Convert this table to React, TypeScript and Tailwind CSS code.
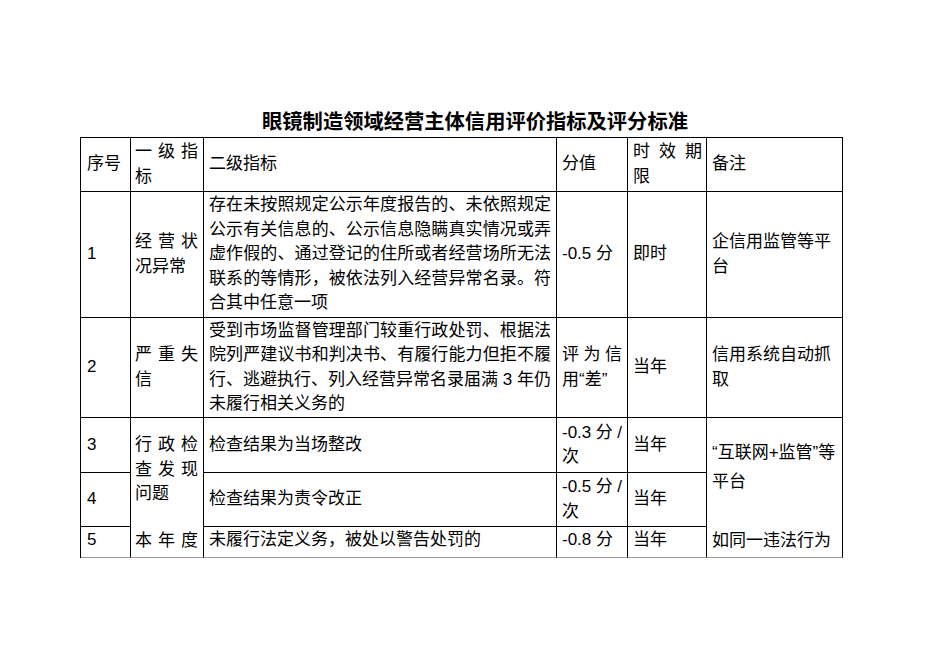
import React from "react";

const FONT = "font-['Liberation_Sans','Noto_Sans_CJK_SC',sans-serif]";

function J({ items }: { items: string[] }) {
  return (
    <div className="flex justify-between whitespace-nowrap">
      {items.map((s, i) => (
        <span key={i}>{s}</span>
      ))}
    </div>
  );
}

function L({ children, justify }: { children: React.ReactNode; justify?: boolean }) {
  return (
    <div className={justify ? "whitespace-nowrap text-justify [text-align-last:justify]" : "whitespace-nowrap"}>
      {children}
    </div>
  );
}

const B = "border-r border-b border-black flex items-center overflow-hidden";
const BL = "border-r border-b border-b-[#9a9a9a] border-r-black flex items-start overflow-hidden";

export default function App() {
  return (
    <div className={`w-[950px] h-[672px] bg-white text-black ${FONT}`}>
      <div className="pt-[108px] text-center text-[20.3px] leading-[28px] font-bold">
        眼镜制造领域经营主体信用评价指标及评分标准
      </div>
      <div className="ml-[80px] mt-px w-[763px] grid grid-cols-[50px_73px_353px_71px_79px_136px] grid-rows-[54px_126px_100px_55px_54px_31px] border-l border-t border-black text-[17px] leading-[24.5px]">
        {/* header */}
        <div className={`${B} pl-[6px]`}>序号</div>
        <div className={`${B} pl-[4px] pr-[5px]`}>
          <div className="w-full">
            <J items={["一", "级", "指"]} />
            <div>标</div>
          </div>
        </div>
        <div className={`${B} pl-[5px]`}>二级指标</div>
        <div className={`${B} pl-[5px]`}>分值</div>
        <div className={`${B} pl-[5px] pr-[4px]`}>
          <div className="w-full">
            <J items={["时", "效", "期"]} />
            <div>限</div>
          </div>
        </div>
        <div className={`${B} pl-[5px]`}>备注</div>

        {/* row 1 */}
        <div className={`${B} pl-[6px]`}>1</div>
        <div className={`${B} pl-[4px] pr-[5px]`}>
          <div className="w-full">
            <J items={["经", "营", "状"]} />
            <div>况异常</div>
          </div>
        </div>
        <div className={`${B} pl-[5px] pr-[5px]`}>
          <div className="w-full">
            <L justify>存在未按照规定公示年度报告的、未依照规定</L>
            <L justify>公示有关信息的、公示信息隐瞒真实情况或弄</L>
            <L justify>虚作假的、通过登记的住所或者经营场所无法</L>
            <L justify>联系的等情形，被依法列入经营异常名录。符</L>
            <L>合其中任意一项</L>
          </div>
        </div>
        <div className={`${B} pl-[5px]`}>-0.5 分</div>
        <div className={`${B} pl-[5px]`}>即时</div>
        <div className={`${B} pl-[5px] pr-[4px]`}>
          <div>
            <L>企信用监管等平</L>
            <L>台</L>
          </div>
        </div>

        {/* row 2 */}
        <div className={`${B} pl-[6px]`}>2</div>
        <div className={`${B} pl-[4px] pr-[5px]`}>
          <div className="w-full">
            <J items={["严", "重", "失"]} />
            <div>信</div>
          </div>
        </div>
        <div className={`${B} pl-[5px] pr-[5px]`}>
          <div className="w-full">
            <L justify>受到市场监督管理部门较重行政处罚、根据法</L>
            <L justify>院列严建议书和判决书、有履行能力但拒不履</L>
            <L justify>行、逃避执行、列入经营异常名录届满 3 年仍</L>
            <L>未履行相关义务的</L>
          </div>
        </div>
        <div className={`${B} pl-[5px] pr-[5px]`}>
          <div className="w-full">
            <J items={["评", "为", "信"]} />
            <div className="whitespace-nowrap">用“差”</div>
          </div>
        </div>
        <div className={`${B} pl-[5px]`}>当年</div>
        <div className={`${B} pl-[5px] pr-[4px]`}>
          <div>
            <L>信用系统自动抓</L>
            <L>取</L>
          </div>
        </div>

        {/* row 3 */}
        <div className={`${B} pl-[6px]`}>3</div>
        <div className="row-span-3 border-r border-b border-r-black border-b-[#9a9a9a] pl-[4px] pr-[5px] pt-[15px] overflow-hidden">
          <J items={["行", "政", "检"]} />
          <J items={["查", "发", "现"]} />
          <div>问题</div>
          <div className="h-[22px]" />
          <J items={["本", "年", "度"]} />
        </div>
        <div className={`${B} pl-[5px]`}>检查结果为当场整改</div>
        <div className={`${B} pl-[5px] pr-[5px]`}>
          <div className="w-full">
            <J items={["-0.3", "分", "/"]} />
            <div>次</div>
          </div>
        </div>
        <div className={`${B} pl-[5px]`}>当年</div>
        <div className="row-span-3 border-r border-b border-r-black border-b-[#9a9a9a] pl-[5px] pr-[4px] pt-[20px] leading-[29.3px] overflow-hidden">
          <L>“互联网+监管”等</L>
          <L>平台</L>
          <div className="h-[29.3px]" />
          <L>如同一违法行为</L>
        </div>

        {/* row 4 */}
        <div className={`${B} pl-[6px]`}>4</div>
        <div className={`${B} pl-[5px]`}>检查结果为责令改正</div>
        <div className={`${B} pl-[5px] pr-[5px]`}>
          <div className="w-full">
            <J items={["-0.5", "分", "/"]} />
            <div>次</div>
          </div>
        </div>
        <div className={`${B} pl-[5px]`}>当年</div>

        {/* row 5 */}
        <div className={`${BL} pl-[6px] pt-[1px]`}>5</div>
        <div className={`${BL} pl-[5px] pt-[1px] whitespace-nowrap`}>未履行法定义务，被处以警告处罚的</div>
        <div className={`${BL} pl-[5px] pt-[1px]`}>-0.8 分</div>
        <div className={`${BL} pl-[5px] pt-[1px]`}>当年</div>
      </div>
    </div>
  );
}
